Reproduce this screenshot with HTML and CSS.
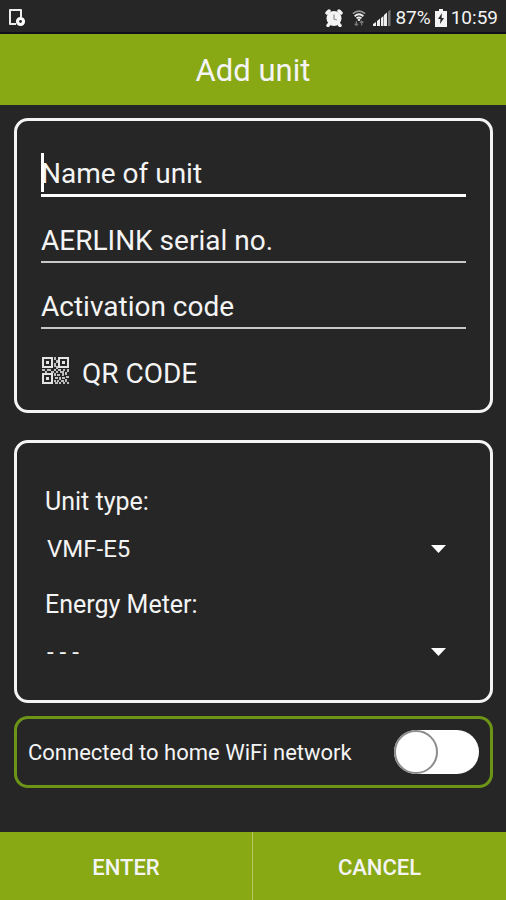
FILE: index.html
```html
<!DOCTYPE html>
<html lang="en">
<head>
  <meta charset="utf-8">
  <meta name="viewport" content="width=device-width, initial-scale=1">
  <title>Add unit</title>
  <link rel="stylesheet" href="styles.css">
</head>
<body>
  <div class="status">
    <svg class="status-note" width="18" height="20" viewBox="0 0 18 20" aria-hidden="true">
      <path d="M8 16H2V2H13V9" fill="none" stroke="#eee" stroke-width="2" stroke-linejoin="round"/>
      <circle cx="12.500" cy="13.500" r="3" fill="none" stroke="#fff" stroke-width="3.200"/>
    </svg>
    <div class="status-right">
      <svg width="18" height="18" viewBox="0 0 18 18" aria-hidden="true">
        <circle cx="9" cy="9.500" r="7.500" fill="#f4f4f4"/>
        <path d="M2 4 4 2M16 4 14 2M3 16.500 5 14M15 16.500 13 14" stroke="#f4f4f4" stroke-width="3.500" stroke-linecap="round"/>
        <path d="M9 5.500v4.500l3 1" fill="none" stroke="#999" stroke-width="1.300"/>
      </svg>
      <svg class="status-wifi" width="14" height="18" viewBox="0 0 16 19" aria-hidden="true">
        <g fill="none" stroke-width="2">
          <path d="M1 4.500Q8-1 15 4.500" stroke="#999"/>
          <path d="M3 7.500Q8 3 13 7.500" stroke="#eee"/>
          <path d="M5.200 10Q8 7.500 10.800 10" stroke="#eee"/>
        </g>
        <circle cx="8" cy="11.500" r="1.500" fill="#eee"/>
        <path d="M5 13v5M3 16l2 2 2-2M11 18v-5M9 15l2-2 2 2" fill="none" stroke="#777" stroke-width="1.500"/>
      </svg>
      <svg width="18" height="18" viewBox="0 0 18 18" aria-hidden="true">
        <path d="M0 17v-2l3-2v4zM4 17v-5l3-2.500V17zM8 17V9l2.500-2V17z" fill="#eee"/>
        <path d="M11 17V6l3-2.500V17z" fill="#eee"/>
        <path d="M15 17V2.500l2.500-2V17z" fill="#777"/>
      </svg>
      <span>87%</span>
      <svg width="12" height="18" viewBox="0 0 12 18" aria-hidden="true">
        <path d="M4 0h4v2h4v16H0V2h4z" fill="#f4f4f4"/>
        <path d="M7 4 3 10h2.500L5 15l4-6H6.500z" fill="#262626"/>
      </svg>
      <span>10:59</span>
    </div>
  </div>

  <header class="header"><h1>Add unit</h1></header>

  <form class="form">
    <main class="content">
      <section class="card card-fields">
        <div class="field field-active">
          <input type="text" placeholder="Name of unit" aria-label="Name of unit">
        </div>
        <div class="field">
          <input type="text" placeholder="AERLINK serial no." aria-label="AERLINK serial no.">
        </div>
        <div class="field">
          <input type="text" placeholder="Activation code" aria-label="Activation code">
        </div>
        <button class="qr" type="button">
          <svg width="27" height="27" viewBox="0 0 27 27" aria-hidden="true">
            <g fill="none" stroke="#e4e4e4" stroke-width="2">
              <path d="M1 1h9v9H1zM17 1h9v9h-9zM1 17h9v9H1z"/>
            </g>
            <g fill="#e4e4e4">
              <path d="M4 4h3v3H4zM20 4h3v3h-3zM4 20h3v3H4z"/>
            </g>
            <path fill="#bdbdbd" d="M12 0h2v3h-2zM14 3h2v3h-2zM12 6h2v4h-2zM14 9h2v3h-2zM0 12h3v2H0zM5 12h4v2H5zM3 14h2v2H3zM9 14h3v2H9zM12 12h2v2h-2zM16 12h3v2h-3zM21 12h2v2h-2zM25 12h2v3h-2zM14 14h2v2h-2zM18 14h4v2h-4zM12 16h2v3h-2zM15 17h3v2h-3zM20 16h2v3h-2zM23 15h2v3h-2zM13 20h3v2h-3zM17 20h2v3h-2zM20 20h3v2h-3zM24 19h3v2h-3zM12 23h2v2h-2zM15 23h2v2h-2zM19 23h3v2h-3zM23 22h2v3h-2zM13 25h3v2h-3zM17 25h2v2h-2zM21 25h2v2h-2zM25 25h2v2h-2z"/>
          </svg>
          <span>QR CODE</span>
        </button>
      </section>

      <section class="card card-selects">
        <label for="unit-type">Unit type:</label>
        <div class="select">
          <select id="unit-type"><option>VMF-E5</option></select>
          <svg width="15" height="8" viewBox="0 0 15 8" aria-hidden="true"><path d="M0 0h15L7.500 8z" fill="#fff"/></svg>
        </div>
        <label for="energy-meter">Energy Meter:</label>
        <div class="select">
          <select id="energy-meter"><option>- - -</option></select>
          <svg width="15" height="8" viewBox="0 0 15 8" aria-hidden="true"><path d="M0 0h15L7.500 8z" fill="#fff"/></svg>
        </div>
      </section>

      <section class="card card-wifi">
        <label for="home-wifi">Connected to home WiFi network</label>
        <input class="toggle" id="home-wifi" type="checkbox" role="switch">
      </section>
    </main>

    <footer class="actions">
      <button type="submit">ENTER</button>
      <button type="button">CANCEL</button>
    </footer>
  </form>
</body>
</html>
```
FILE: styles.css
```css
*,
*::before {
  box-sizing: border-box;
}

body {
  margin: 0;
  min-height: 100vh;
  display: flex;
  flex-direction: column;
  background: #262626;
  color: #f4f4f4;
  font-family: Roboto, "Liberation Sans", sans-serif;
}

button,
input,
select {
  margin: 0;
  padding: 0;
  border: 0;
  border-radius: 0;
  background: none;
  color: inherit;
  font: inherit;
  outline: none;
}

svg {
  display: block;
  flex: none;
}

.status {
  display: flex;
  align-items: center;
  justify-content: space-between;
  height: 34px;
  padding: 4px 8px 0;
  border-bottom: 2px solid #10101c;
  font-size: 19px;
  line-height: 28px;
}

.status-right {
  display: flex;
  align-items: center;
  gap: 4px;
}

.status-wifi {
  margin: 0 3px 0 5px;
}

.header {
  background: #88a814;
  text-align: center;
}

.header h1 {
  margin: 0;
  padding-top: 2px;
  font-size: 31px;
  font-weight: 400;
  line-height: 69px;
}

.form {
  flex: 1;
  display: flex;
  flex-direction: column;
}

.content {
  flex: 1;
  padding: 13px 13px 0 14px;
}

.card {
  border: 3px solid #f4f4f4;
  border-radius: 14px;
}

.card-fields {
  padding: 32px 24px 17px;
  font-size: 28px;
}

.field {
  position: relative;
  border-bottom: 2px solid #c8c8c8;
}

.field + .field {
  margin-top: 23px;
}

.field-active {
  border-bottom: 3px solid #fff;
}

.field-active::before {
  content: "";
  position: absolute;
  left: 0;
  top: 0;
  width: 3px;
  height: 39px;
  background: #fff;
}

.field input {
  display: block;
  width: 100%;
  height: 41px;
}

.field input::placeholder {
  color: inherit;
  opacity: 1;
}

.qr {
  display: flex;
  align-items: center;
  gap: 13px;
  margin-top: 25px;
  padding-left: 1px;
  line-height: 39px;
}

.qr svg {
  margin-bottom: 6px;
}

.card-selects {
  margin-top: 27px;
  padding: 39px 28px 21px;
  font-size: 25px;
}

.card-selects label {
  display: block;
  line-height: 40px;
}

.select {
  display: grid;
  align-items: center;
}

.select + label {
  margin-top: 9px;
}

.select select,
.select svg {
  grid-area: 1 / 1;
}

.select select {
  appearance: none;
  width: 100%;
  height: 54px;
  padding-left: 2px;
  font-size: 24px;
}

.select svg {
  justify-self: end;
  margin-right: 16px;
  pointer-events: none;
}

.card-wifi {
  display: flex;
  align-items: center;
  justify-content: space-between;
  margin-top: 13px;
  padding: 11px;
  border-color: #6c9518;
  font-size: 22px;
}

.toggle {
  appearance: none;
  flex: none;
  width: 85px;
  height: 44px;
  border-radius: 22px;
  background: #fff;
}

.toggle::before {
  content: "";
  display: block;
  width: 44px;
  height: 44px;
  border: 2px solid #8c8c8c;
  border-radius: 50%;
}

.toggle:checked::before {
  margin-left: auto;
}

.actions {
  display: grid;
  grid-template-columns: 1fr 1fr;
  background: #88a814;
}

.actions button {
  height: 68px;
  padding-top: 2px;
  font-size: 22px;
  font-weight: 500;
}

.actions button:first-child {
  border-right: 1px solid #b3c95f;
}
```
